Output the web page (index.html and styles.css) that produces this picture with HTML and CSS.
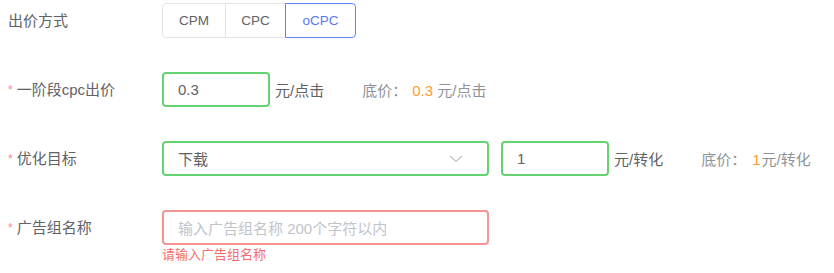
FILE: index.html
```html
<!DOCTYPE html>
<html lang="zh-CN">
<head>
<meta charset="utf-8">
<link rel="stylesheet" href="styles.css">
</head>
<body>
<div class="form">
  <div class="row">
    <div class="label">出价方式</div>
    <div class="control">
      <div class="radio-group">
        <span class="radio-btn cpm">CPM</span>
        <span class="radio-btn cpc">CPC</span>
        <span class="radio-btn ocpc active">oCPC</span>
      </div>
    </div>
  </div>
  <div class="row">
    <div class="label"><span class="star">*</span>一阶段cpc出价</div>
    <div class="control">
      <div class="input success short"><span class="value">0.3</span></div>
      <span class="unit">元/点击</span>
      <span class="floor">底价：<span class="price">0.3</span> 元/点击</span>
    </div>
  </div>
  <div class="row">
    <div class="label"><span class="star">*</span>优化目标</div>
    <div class="control">
      <div class="input success wide select"><span class="value">下载</span>
        <svg class="chev" width="14" height="8" viewBox="0 0 14 8"><polyline points="1,1 7,6.5 13,1" fill="none" stroke="#c0c4cc" stroke-width="1.2"/></svg>
      </div>
      <div class="input success short gap"><span class="value">1</span></div>
      <span class="unit">元/转化</span>
      <span class="floor">底价：<span class="price tight">1</span>元/转化</span>
    </div>
  </div>
  <div class="row last">
    <div class="label"><span class="star">*</span>广告组名称</div>
    <div class="control col">
      <div class="input error wide"><span class="placeholder">输入广告组名称 200个字符以内</span></div>
      <div class="err-msg">请输入广告组名称</div>
    </div>
  </div>
</div>
</body>
</html>
```
FILE: styles.css
```css
* { box-sizing: border-box; }
body {
  margin: 0;
  background: #fff;
  font-family: "Liberation Sans", "Noto Sans CJK SC", sans-serif;
  font-size: 15px;
  color: #606266;
}
.form {
  padding: 3px 8px 8px 8px;
  display: flex;
  flex-direction: column;
  gap: 34px;
}
.row {
  display: flex;
  align-items: flex-start;
  min-height: 35px;
}
.label {
  width: 154px;
  height: 35px;
  line-height: 35px;
  color: #606266;
  white-space: nowrap;
}
.star {
  color: #f78989;
  font-size: 12px;
  margin-right: 4px;
  vertical-align: 1px;
}
.control {
  display: flex;
  align-items: center;
  height: 35px;
}
.control.col {
  flex-direction: column;
  align-items: flex-start;
  height: auto;
}
.radio-group {
  display: flex;
  height: 35px;
}
.radio-btn {
  display: flex;
  align-items: center;
  justify-content: center;
  height: 35px;
  font-size: 13.5px;
  color: #606266;
  border: 1px solid #e1e4ea;
  background: #fff;
}
.cpm { width: 64px; border-radius: 4px 0 0 4px; }
.cpc { width: 60px; border-left: none; }
.ocpc { width: 70px; border-left: none; border-radius: 0 4px 4px 0; }
.radio-btn.active {
  color: #5a78f5;
  border: 1px solid #6283f7;
  margin-left: -1px;
  width: 71px;
}
.input {
  display: flex;
  align-items: center;
  height: 35px;
  border: 1px solid #dcdfe6;
  border-radius: 4px;
  padding: 0 15px;
  background: #fff;
}
.input.success { border: 2px solid #66d372; padding: 0 14px; }
.input.error { border: 2px solid #f79393; padding: 0 14px; }
.short { width: 108px; }
.wide { width: 327px; }
.gap { margin-left: 12px; }
.select { justify-content: space-between; }
.chev { margin-right: 10px; }
.value { color: #606266; }
.placeholder { color: #c0c4cc; }
.unit {
  margin-left: 5px;
  color: #606266;
}
.floor {
  margin-left: 38px;
  color: #909399;
  white-space: nowrap;
}
.price {
  color: #ff9a2e;
  margin-left: 5px;
}
.price.tight { margin-left: 6px; margin-right: 1px; }
.err-msg {
  color: #f56c6c;
  font-size: 13px;
  line-height: 13px;
  margin-top: 3px;
}
```
